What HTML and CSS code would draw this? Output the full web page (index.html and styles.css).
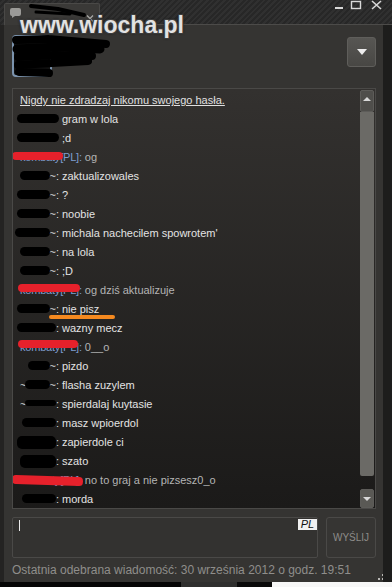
FILE: index.html
```html
<!DOCTYPE html>
<html lang="pl">
<head>
  <meta charset="UTF-8">
  <meta name="viewport" content="width=device-width, initial-scale=1.0">
  <link rel="stylesheet" href="styles.css">
  <title>Rozmowa</title>
</head>
<body>
  <div class="titlebar">
    <div class="tab">
      <svg class="bubble" width="11" height="10" viewBox="0 0 11 10"><path d="M2 0h7a2 2 0 0 1 2 2v4a2 2 0 0 1-2 2H5L2 10V8a2 2 0 0 1-2-2V2a2 2 0 0 1 2-2z" fill="#9b9a97"/></svg>
      <svg class="tab-close" width="8" height="7" viewBox="0 0 8 7"><path d="M1 .5l6 6M7 .5l-6 6" stroke="#a9a8a5" stroke-width="1.3"/></svg>
    </div>
    <div class="titlebar-rest"></div>
    <div class="controls">
      <svg width="48" height="11" viewBox="0 0 48 11">
        <rect x="0" y="7" width="8" height="2" fill="#d8d8d8"/>
        <rect x="16.5" y="1.5" width="9" height="7" fill="none" stroke="#d8d8d8" stroke-width="1.4"/>
        <path d="M37 1l9 8M46 1l-9 8" stroke="#d8d8d8" stroke-width="1.6"/>
      </svg>
    </div>
  </div>

  <div class="frame">
    <div class="panel">
      <div class="header">
        <div class="avatar"></div>
        <div class="who">
          <div class="who-line"><i class="blob"></i><span class="caret-down"></span></div>
          <div class="who-line"><i class="blob short"></i></div>
        </div>
        <button class="menu-btn"></button>
      </div>

      <div class="chat">
        <div class="messages">
          <div class="msg notice">Nigdy nie zdradzaj nikomu swojego hasła.</div>
          <div class="msg"><span class="nick"><i class="blob"></i></span><span class="txt">gram w lola</span></div>
          <div class="msg"><span class="nick"><i class="blob"></i></span><span class="txt">;d</span></div>
          <div class="msg"><span class="nick me s1">kombaty[PL]:</span><span class="txt mine">og</span></div>
          <div class="msg"><span class="nick"><i class="blob from-20"></i>~:</span><span class="txt">zaktualizowales</span></div>
          <div class="msg"><span class="nick"><i class="blob"></i>~:</span><span class="txt">?</span></div>
          <div class="msg"><span class="nick"><i class="blob"></i>~:</span><span class="txt">noobie</span></div>
          <div class="msg"><span class="nick"><i class="blob from-15"></i>~:</span><span class="txt">michala nachecilem spowrotem'</span></div>
          <div class="msg"><span class="nick"><i class="blob from-20"></i>~:</span><span class="txt">na lola</span></div>
          <div class="msg"><span class="nick"><i class="blob from-20"></i>~:</span><span class="txt">;D</span></div>
          <div class="msg"><span class="nick me s2">kombaty[PL]:</span><span class="txt mine">og dziś aktualizuje</span></div>
          <div class="msg marked"><span class="nick"><i class="blob"></i>~:</span><span class="txt">nie pisz</span></div>
          <div class="msg"><span class="nick"><i class="blob"></i>:</span><span class="txt">wazny mecz</span></div>
          <div class="msg"><span class="nick me s3">kombaty[PL]:</span><span class="txt mine">0__o</span></div>
          <div class="msg"><span class="nick"><i class="blob from-28"></i>~:</span><span class="txt">pizdo</span></div>
          <div class="msg"><span class="nick">~<i class="blob from-25"></i>~:</span><span class="txt">flasha zuzylem</span></div>
          <div class="msg"><span class="nick">~<i class="blob from-25 thin"></i>:</span><span class="txt">spierdalaj kuytasie</span></div>
          <div class="msg"><span class="nick"><i class="blob from-22"></i>:</span><span class="txt">masz wpioerdol</span></div>
          <div class="msg"><span class="nick"><i class="blob tall"></i>:</span><span class="txt">zapierdole ci</span></div>
          <div class="msg"><span class="nick"><i class="blob from-20 tall"></i>:</span><span class="txt">szato</span></div>
          <div class="msg"><span class="nick me s4">kombaty[PL]:</span><span class="txt mine">no to graj a nie pizsesz0_o</span></div>
          <div class="msg"><span class="nick"><i class="blob from-22"></i>:</span><span class="txt">morda</span></div>
        </div>
        <div class="scroll">
          <div class="scroll-btn up"></div>
          <div class="thumb"></div>
          <div class="scroll-gap"></div>
          <div class="scroll-btn down"></div>
        </div>
      </div>

      <div class="compose">
        <div class="input">
          <span class="caret"></span>
          <span class="lang">PL</span>
        </div>
        <button class="send">WYŚLIJ</button>
      </div>

      <div class="footer">
        <span>Ostatnia odebrana wiadomość: 30 września 2012 o godz. 19:51</span>
        <svg class="grip" width="11" height="11" viewBox="0 0 11 11" fill="#b9b8b5">
          <rect x="8" y="0" width="2" height="2"/>
          <rect x="4" y="4" width="2" height="2"/><rect x="8" y="4" width="2" height="2"/>
          <rect x="0" y="8" width="2" height="2"/><rect x="4" y="8" width="2" height="2"/><rect x="8" y="8" width="2" height="2"/>
        </svg>
      </div>
    </div>
    <div class="edge"></div>
  </div>

  <div class="strip">
    <span class="strip-black"></span>
    <span class="strip-grey"></span>
    <span class="strip-dark"></span>
    <span class="strip-white"></span>
  </div>

  <div class="watermark">www.wiocha.pl</div>

  <!-- marker scribbles over the nick and avatar -->
  <svg class="scribble" width="120" height="82" viewBox="0 0 120 82">
    <g fill="none" stroke="#000" stroke-linecap="round" stroke-linejoin="round">
      <path d="M31 6 L58 9 L84 15" stroke-width="4"/>
      <path d="M36 12 L70 14" stroke-width="3"/>
      <path d="M16 40 L48 39 L106 44" stroke-width="8"/>
      <path d="M17 49 L60 47 L100 49" stroke-width="9"/>
      <path d="M18 57 L55 55 L92 56" stroke-width="8"/>
      <path d="M18 65 L52 63 L88 61" stroke-width="8"/>
      <path d="M19 72 L49 73" stroke-width="8"/>
    </g>
  </svg>
</body>
</html>
```

FILE: styles.css
```css
body {
  margin: 0;
  width: 392px;
  height: 587px;
  overflow: hidden;
  position: relative;
  background: #242322;
  font-family: "Liberation Sans", Arial, sans-serif;
}

/* title bar */
.titlebar {
  width: 392px;
  height: 25px;
  display: flex;
  align-items: flex-end;
  background: repeating-linear-gradient(135deg, #272727 0 2px, #303030 2px 4px);
}

.tab {
  flex: none;
  margin-left: 4px;
  width: 96px;
  height: 22px;
  box-sizing: border-box;
  background: #3a3937;
  border: 1px solid #4a4947;
  border-bottom: 0;
  border-radius: 2px 2px 0 0;
  display: flex;
  align-items: flex-start;
  padding: 4px 5px 0 5px;
}

.tab-close {
  margin: 7px 0 0 auto;
}

.titlebar-rest {
  flex: 1;
  height: 1px;
  background: #4c4b49;
}

.controls {
  flex: none;
  align-self: flex-start;
  width: 57px;
  height: 25px;
  padding-top: 0;
  background: linear-gradient(transparent 24px, #4c4b49 24px 25px, transparent 25px);
}

.controls svg {
  display: block;
}

/* main window */
.frame {
  display: flex;
  height: 557px;
  padding-left: 4px;
}

.panel {
  width: 379px;
  box-sizing: border-box;
  background: #353432;
  padding: 0 7px 0 8px;
  display: flex;
  flex-direction: column;
}

.edge {
  flex: 1;
  background: #1d1d1c;
}

.header {
  height: 63px;
  display: flex;
  align-items: flex-start;
}

.avatar {
  width: 40px;
  height: 42px;
  margin-top: 10px;
  box-sizing: border-box;
  border: 2px solid #7b93ad;
  border-radius: 4px;
  background: #111;
}

.who {
  margin: 15px 0 0 4px;
  display: flex;
  flex-direction: column;
  gap: 8px;
}

.who-line {
  display: flex;
  align-items: center;
  width: 52px;
  height: 8px;
}

.who .blob {
  flex: 1;
  height: 8px;
  margin: 0;
}

.who .blob.short {
  flex: none;
  width: 36px;
}

.caret-down {
  margin-left: 3px;
  border-left: 4px solid transparent;
  border-right: 4px solid transparent;
  border-top: 4px solid #e4e4e4;
}

.menu-btn {
  margin: 12px 0 0 auto;
  width: 29px;
  height: 30px;
  padding: 0;
  border: 1px solid #5f5e5b;
  border-radius: 3px;
  background: linear-gradient(#575653, #484744);
  display: flex;
  align-items: center;
  justify-content: center;
}

.menu-btn::before {
  content: "";
  border-left: 5px solid transparent;
  border-right: 5px solid transparent;
  border-top: 6px solid #ededed;
}

/* chat log */
.chat {
  height: 421px;
  box-sizing: border-box;
  border: 1px solid #4a4947;
  background: linear-gradient(#33312f, #1b1a19);
  display: flex;
}

.messages {
  flex: 1;
  overflow: hidden;
  padding: 2px 0 0 7px;
  font-size: 11px;
  line-height: 19px;
  color: #e3e3e3;
}

.msg {
  display: flex;
  align-items: center;
  height: 19px;
  white-space: nowrap;
  position: relative;
}

.notice {
  color: #e0e0e0;
  text-decoration: underline;
}

.nick {
  flex: none;
  width: 39px;
  display: flex;
  align-items: center;
  color: #dcdcdc;
}

.blob {
  flex: 1;
  height: 9px;
  margin: 0 0 3px -3px;
  background: #000;
  border-radius: 5px;
}

.blob.from-15 { margin-left: -5px; }
.blob.from-20 { margin-left: 0; }
.blob.from-22 { margin-left: 2px; }
.blob.from-25 { margin-left: -1px; }
.blob.from-28 { margin-left: 8px; }
.blob.thin { height: 6px; }
.blob.tall { height: 13px; margin-bottom: 0; }

.txt {
  margin-left: 3px;
}

.nick.me {
  width: auto;
  position: relative;
  color: #7d9dcf;
  letter-spacing: -0.2px;
}

.txt.mine {
  color: #b4b4b4;
}

.nick.me::after {
  content: "";
  position: absolute;
  background: #e6212b;
  border-radius: 4px;
}

.nick.me.s1::after { left: -8px; top: 4px; width: 51px; height: 8px; }
.nick.me.s2::after { left: -2px; top: 3px; width: 62px; height: 8px; }
.nick.me.s3::after { left: -2px; top: 2px; width: 60px; height: 8px; }
.nick.me.s4::after { left: -8px; top: 5px; width: 71px; height: 9px; transform: rotate(2deg); }

.msg.marked::after {
  content: "";
  position: absolute;
  left: 29px;
  top: 15px;
  width: 66px;
  height: 4px;
  border-radius: 2px;
  background: #f5891f;
}

/* scrollbar */
.scroll {
  width: 14px;
  margin: 1px 1px 0 0;
  display: flex;
  flex-direction: column;
}

.scroll-btn {
  box-sizing: border-box;
  border: 1px solid #5d5c59;
  border-radius: 2px;
  background: #4f4e4b;
  display: flex;
  align-items: center;
  justify-content: center;
}

.scroll-btn.up {
  height: 22px;
}

.scroll-btn.up::before {
  content: "";
  border-left: 4px solid transparent;
  border-right: 4px solid transparent;
  border-bottom: 4px solid #d9d9d9;
  margin-top: -5px;
}

.thumb {
  height: 364px;
  background: #6b6a66;
  border-radius: 0 0 2px 2px;
}

.scroll-gap {
  flex: 1;
}

.scroll-btn.down {
  height: 19px;
  background: #5a5955;
}

.scroll-btn.down::before {
  content: "";
  border-left: 4px solid transparent;
  border-right: 4px solid transparent;
  border-top: 4px solid #d9d9d9;
}

/* message input */
.compose {
  margin-top: 8px;
  height: 41px;
  display: flex;
  gap: 8px;
}

.input {
  flex: 1;
  box-sizing: border-box;
  border: 1px solid #4a4947;
  border-radius: 2px;
  background: #333230;
  display: flex;
  align-items: flex-start;
}

.caret {
  width: 1px;
  height: 11px;
  margin: 2px 0 0 6px;
  background: #ececec;
}

.lang {
  margin: 1px 0 0 auto;
  width: 19px;
  height: 11px;
  background: #f0f0f0;
  color: #111;
  font-size: 11px;
  font-style: italic;
  line-height: 11px;
  text-align: center;
}

.send {
  width: 50px;
  padding: 0;
  box-sizing: border-box;
  border: 1px solid #4a4947;
  border-radius: 3px;
  background: #363533;
  color: #8d8c89;
  font-family: "Liberation Sans", Arial, sans-serif;
  font-size: 10px;
}

/* status line */
.footer {
  height: 24px;
  display: flex;
  align-items: flex-start;
  padding-top: 4px;
  box-sizing: border-box;
  font-size: 12px;
  line-height: 16px;
  color: #8f8e8b;
}

.grip {
  margin: 8px -13px 0 auto;
}

.strip {
  display: flex;
  height: 5px;
}

.strip-black { width: 181px; background: #050505; }
.strip-grey { width: 56px; background: #2f2f2e; }
.strip-dark { width: 35px; background: #0a0a0a; }
.strip-white { flex: 1; background: #f7f7f7; }

/* overlays */
.watermark {
  position: absolute;
  left: 20px;
  top: 14px;
  font-size: 23px;
  font-weight: bold;
  line-height: 1;
  color: #e2e2e2;
  text-shadow: -1px -1px 0 #3c3c3c, 1px -1px 0 #3c3c3c, -1px 1px 0 #3c3c3c, 1px 1px 0 #3c3c3c, 0 0 3px #000;
}

.scribble {
  position: absolute;
  left: 0;
  top: 0;
}
```
